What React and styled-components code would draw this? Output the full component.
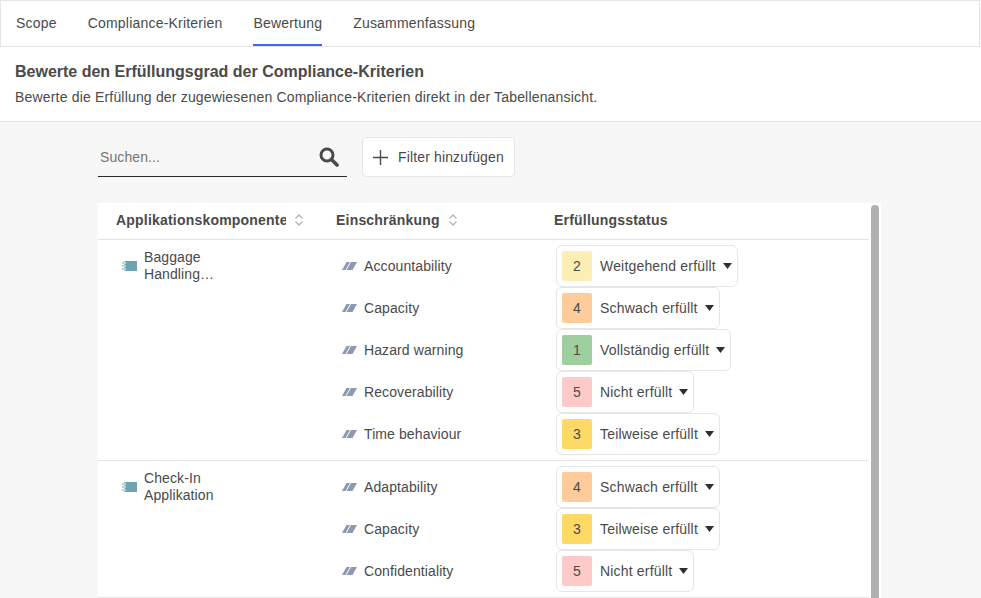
import React from "react";
import styled, { createGlobalStyle } from "styled-components";

const Global = createGlobalStyle`
  html, body { margin: 0; padding: 0; height: 100%; overflow: hidden; background: #fff; }
  body { font-family: "Liberation Sans", Arial, sans-serif; color: #4a4a4a; font-size: 14px; }
`;
const Page = styled.div`width: 981px; height: 598px; overflow: hidden; display: flex; flex-direction: column; background: #f7f7f7;`;
const Tabs = styled.nav`
  height: 46px; box-sizing: border-box; flex: none; display: flex; gap: 31px; padding: 0 15px; margin-right: 1px;
  background: #fff; border: 1px solid #e6e6e6; border-bottom: 0; box-shadow: 0 1px 0 #e6e6e6;
`;
const Tab = styled.div`
  height: 45px; box-sizing: border-box; line-height: 45px; letter-spacing: .2px; color: #4a4a4a; white-space: nowrap;
  border-bottom: 2px solid ${p => (p.$active ? "#4065f6" : "transparent")};
`;
const Intro = styled.header`
  flex: none; height: 76px; box-sizing: border-box; background: #fff; border-top: 1px solid #e6e6e6; border-bottom: 1px solid #e4e4e4; padding: 16px 15px 0;
`;
const Title = styled.h1`margin: 0; font-size: 16px; line-height: 18px; font-weight: 700; color: #4a4a4a;`;
const Sub = styled.p`margin: 7px 0 0; line-height: 18px; letter-spacing: .178px; color: #4a4a4a;`;
const Body = styled.main`flex: 1; min-height: 0; padding: 15px 0 0 98px;`;
const Toolbar = styled.div`display: flex; gap: 15px; height: 40px;`;
const Search = styled.div`
  width: 249px; height: 40px; box-sizing: border-box; border-bottom: 1px solid #2b2b2b; display: flex; align-items: center; justify-content: space-between; padding: 0 8px 0 2px;
`;
const Placeholder = styled.span`color: #757575; letter-spacing: .1px;`;
const FilterButton = styled.button`
  width: 153px; height: 40px; box-sizing: border-box; background: #fff; border: 1px solid #e6e6e6; border-radius: 4px; display: flex; align-items: center; gap: 10px; padding: 0 0 0 10px;
  font: 14px "Liberation Sans", Arial, sans-serif; letter-spacing: .14px; color: #4a4a4a; white-space: nowrap;
`;
const TableWrap = styled.div`position: relative; width: 783px; margin-top: 26px; background: #fff; overflow: hidden; height: 400px;`;
const HeadRow = styled.div`
  display: grid; grid-template-columns: 220px 218px 1fr; height: 37px; box-sizing: border-box; width: 771px; border-bottom: 1px solid #e4e4e4; align-items: center; padding-bottom: 2px;
`;
const HeadCell = styled.div`
  display: flex; align-items: center; padding-left: 18px; font-weight: 700; letter-spacing: .2px; color: #4a4a4a; white-space: nowrap; box-sizing: border-box; min-width: 0;
`;
const HeadLabel = styled.span`display: block; overflow: hidden; max-width: ${p => p.$max || "none"};`;
const SortIcon = styled.svg`width: 10px; height: 12px; margin-left: 8px; flex: none;`;
const Group = styled.section`
  display: grid; grid-template-columns: 220px 1fr; width: 771px; border-bottom: 1px solid #e4e4e4; padding: 5px 0;
`;
const Comp = styled.div`display: flex; gap: 7px; padding: 4px 0 0 24px; align-items: flex-start;`;
const CompIconSlot = styled.svg`width: 15px; height: 10px; margin-top: 12px; flex: none;`;
const CompName = styled.div`width: 85px; line-height: 17px; letter-spacing: .1px;`;
const Rows = styled.div`display: flex; flex-direction: column;`;
const Row = styled.div`display: grid; grid-template-columns: 238px 1fr; height: 42px; align-items: center;`;
const Constraint = styled.div`display: flex; align-items: center; gap: 7px; padding-left: 24px; letter-spacing: .1px;`;
const ConstraintIcon = styled.svg`width: 15px; height: 8px; flex: none;`;
const Chip = styled.div`
  justify-self: start; height: 42px; box-sizing: border-box; border: 1px solid #e6e6e6; border-radius: 6px; background: #fff; display: flex; align-items: center; padding: 0 5px; white-space: nowrap; letter-spacing: .18px;
`;
const Badge = styled.span`
  width: 30px; height: 30px; border-radius: 2px; background: ${p => p.$bg}; display: flex; align-items: center; justify-content: center; margin-right: 8px; font-size: 14px; letter-spacing: 0;
`;
const Caret = styled.svg`width: 9px; height: 6px; margin-left: 7px; flex: none;`;
const Thumb = styled.div`position: absolute; left: 773px; top: 2px; bottom: 0; width: 8px; background: #b0b0b0; border-radius: 4px 4px 0 0;`;

const LEVELS = {
  1: ["#9fcf9f", "Vollständig erfüllt"],
  2: ["#fdeeb5", "Weitgehend erfüllt"],
  3: ["#ffd966", "Teilweise erfüllt"],
  4: ["#fecb9b", "Schwach erfüllt"],
  5: ["#fdc9c9", "Nicht erfüllt"],
};
const DATA = [
  { name: "Baggage Handling…", rows: [["Accountability", 2], ["Capacity", 4], ["Hazard warning", 1], ["Recoverability", 5], ["Time behaviour", 3]] },
  { name: "Check-In Applikation", rows: [["Adaptability", 4], ["Capacity", 3], ["Confidentiality", 5]] },
];

const Sort = () => (
  <SortIcon viewBox="0 0 10 12" fill="none" stroke="#b4b4b4" strokeWidth="1.3">
    <path d="M1.500 4.500 5 1 8.500 4.500M1.500 7.500 5 11 8.500 7.500" />
  </SortIcon>
);

export default function App() {
  return (
    <Page>
      <Global />
      <Tabs>
        <Tab>Scope</Tab>
        <Tab>Compliance-Kriterien</Tab>
        <Tab $active>Bewertung</Tab>
        <Tab>Zusammenfassung</Tab>
      </Tabs>
      <Intro>
        <Title>Bewerte den Erfüllungsgrad der Compliance-Kriterien</Title>
        <Sub>Bewerte die Erfüllung der zugewiesenen Compliance-Kriterien direkt in der Tabellenansicht.</Sub>
      </Intro>
      <Body>
        <Toolbar>
          <Search>
            <Placeholder>Suchen...</Placeholder>
            <svg width="20" height="20" viewBox="0 0 20 20" fill="none" stroke="#4a4a4a">
              <circle cx="8" cy="8" r="6" strokeWidth="3" />
              <path d="M12.500 12.500l5.500 5.500" strokeWidth="3.600" strokeLinecap="round" />
            </svg>
          </Search>
          <FilterButton>
            <svg width="15" height="15" viewBox="0 0 15 15" stroke="#4a4a4a" strokeWidth="1.4">
              <path d="M7.500 0v15M0 7.500h15" />
            </svg>
            Filter hinzufügen
          </FilterButton>
        </Toolbar>
        <TableWrap>
          <HeadRow>
            <HeadCell><HeadLabel $max="170px">Applikationskomponente</HeadLabel><Sort /></HeadCell>
            <HeadCell>Einschränkung<Sort /></HeadCell>
            <HeadCell>Erfüllungsstatus</HeadCell>
          </HeadRow>
          {DATA.map(g => (
            <Group key={g.name}>
              <Comp>
                <CompIconSlot viewBox="0 0 15 10">
                  <rect x="2.500" y="0" width="12.500" height="10" fill="#6ea3b0" />
                  <path d="M0 2h4M0 5h4M0 8h4" stroke="#fff" strokeWidth="1" />
                  <path d="M0 2h2.500M0 5h2.500M0 8h2.500" stroke="#6ea3b0" strokeWidth="1" />
                </CompIconSlot>
                <CompName>{g.name}</CompName>
              </Comp>
              <Rows>
                {g.rows.map(([label, lvl]) => (
                  <Row key={label}>
                    <Constraint>
                      <ConstraintIcon viewBox="0 0 15 8" fill="#8e98b0">
                        <path d="M4.500 0H8L3.500 8H0zM9 0H15L10.500 8H4.500z" />
                      </ConstraintIcon>
                      {label}
                    </Constraint>
                    <Chip>
                      <Badge $bg={LEVELS[lvl][0]}>{lvl}</Badge>
                      {LEVELS[lvl][1]}
                      <Caret viewBox="0 0 9 6" fill="#2f2f2f"><path d="M0 0h9L4.500 6z" /></Caret>
                    </Chip>
                  </Row>
                ))}
              </Rows>
            </Group>
          ))}
          <Thumb />
        </TableWrap>
      </Body>
    </Page>
  );
}
